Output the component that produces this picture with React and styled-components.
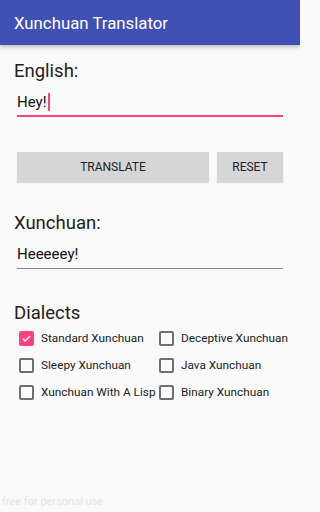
import React from 'react';
import styled, { createGlobalStyle } from 'styled-components';

const ACCENT = '#ff4081';

const dialects = [
  { name: 'Standard Xunchuan', checked: true },
  { name: 'Deceptive Xunchuan' },
  { name: 'Sleepy Xunchuan' },
  { name: 'Java Xunchuan' },
  { name: 'Xunchuan With A Lisp' },
  { name: 'Binary Xunchuan' },
];

const Check = () => (
  <svg width="11" height="11" viewBox="0 0 24 24">
    <path d="M4 12.5l5 5L20 6.5" fill="none" stroke="#fff" strokeWidth="3.2" />
  </svg>
);

const App = () => (
  <>
    <GlobalStyle />
    <Screen>
      <AppBar>Xunchuan Translator</AppBar>
      <Content>
        <Label>English:</Label>
        <Field $focused>
          Hey!<Cursor />
        </Field>
        <Buttons>
          <Button $grow>TRANSLATE</Button>
          <Button>RESET</Button>
        </Buttons>
        <Label $top={29}>Xunchuan:</Label>
        <Field>Heeeeey!</Field>
        <Label $top={32}>Dialects</Label>
        <Grid>
          {dialects.map((d) => (
            <Option key={d.name}>
              <Box $checked={d.checked}>{d.checked && <Check />}</Box>
              {d.name}
            </Option>
          ))}
        </Grid>
      </Content>
      <Watermark>free for personal use</Watermark>
    </Screen>
  </>
);

const GlobalStyle = createGlobalStyle`
  body {
    margin: 0;
    background: #fafafa;
    font-family: Roboto, "Liberation Sans", sans-serif;
  }
`;

const Screen = styled.div`
  width: 300px;
  height: 512px;
  display: flex;
  flex-direction: column;
  background: #fafafa;
  overflow: hidden;
`;

const AppBar = styled.header`
  height: 45px;
  flex-shrink: 0;
  display: flex;
  align-items: center;
  padding: 0 14px;
  background: #3f51b5;
  color: #fff;
  font-size: 16.8px;
  box-shadow: 0 2px 4px rgba(0, 0, 0, 0.25);
`;

const Content = styled.main`
  flex: 1;
  display: flex;
  flex-direction: column;
  padding: 14px 17px 0 17px;
`;

const Label = styled.div`
  margin: ${(p) => p.$top || 0}px 0 0 -3px;
  font-size: 18.5px;
  color: #212121;
  line-height: 24px;
`;

const Field = styled.div`
  margin-top: 5px;
  height: 27px;
  display: flex;
  align-items: center;
  font-size: 15px;
  color: #111;
  border-bottom: ${(p) => (p.$focused ? `2px solid ${ACCENT}` : '1px solid #8a8a8a')};
  padding-bottom: ${(p) => (p.$focused ? 0 : 1)}px;
`;

const Cursor = styled.span`
  width: 2px;
  height: 18px;
  margin-left: 1px;
  background: ${ACCENT};
`;

const Buttons = styled.div`
  margin-top: 35px;
  display: flex;
  gap: 8px;
`;

const Button = styled.div`
  flex: ${(p) => (p.$grow ? 1 : '0 0 66px')};
  height: 30px;
  display: flex;
  align-items: center;
  justify-content: center;
  background: #d6d6d6;
  color: #222;
  font-size: 12px;
  box-shadow: 0 1px 1px rgba(0, 0, 0, 0.12);
`;

const Grid = styled.div`
  margin-top: 4px;
  display: grid;
  grid-template-columns: 140px 1fr;
  row-gap: 9px;
`;

const Option = styled.label`
  display: flex;
  align-items: center;
  gap: 7px;
  height: 18px;
  font-size: 11.8px;
  color: #222;
  white-space: nowrap;
`;

const Box = styled.span`
  width: 15px;
  height: 15px;
  margin-left: 2px;
  box-sizing: border-box;
  border-radius: 2px;
  display: flex;
  align-items: center;
  justify-content: center;
  background: ${(p) => (p.$checked ? ACCENT : 'transparent')};
  border: ${(p) => (p.$checked ? 'none' : '2px solid #6f6f6f')};
`;

const Watermark = styled.div`
  padding: 0 0 4px 2px;
  font-size: 11px;
  color: #e4e4e4;
`;

export default App;
